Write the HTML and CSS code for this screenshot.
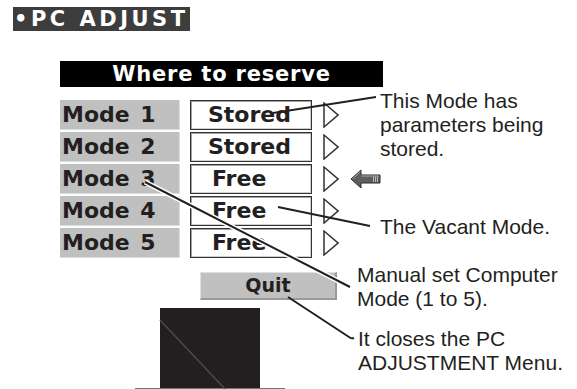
FILE: index.html
```html
<!DOCTYPE html>
<html lang="en">
<head>
  <meta charset="UTF-8">
  <meta name="viewport" content="width=device-width, initial-scale=1.0">
  <title>PC Adjust</title>
  <link rel="stylesheet" href="styles.css">
</head>
<body>
  <div class="page">
    <div class="title">&bull;PC ADJUST</div>

    <div class="menu">
      <div class="menu-head">Where to reserve</div>
      <div class="modes">
        <div class="mode">
          <div class="mode-name">Mode 1</div>
          <div class="mode-state">Stored</div>
          <svg class="pointer" viewBox="0 0 16 26"><polygon points="1,1 15,13 1,25" /></svg>
        </div>
        <div class="mode">
          <div class="mode-name">Mode 2</div>
          <div class="mode-state">Stored</div>
          <svg class="pointer" viewBox="0 0 16 26"><polygon points="1,1 15,13 1,25" /></svg>
        </div>
        <div class="mode">
          <div class="mode-name">Mode 3</div>
          <div class="mode-state free">Free</div>
          <svg class="pointer" viewBox="0 0 16 26"><polygon points="1,1 15,13 1,25" /></svg>
          <svg class="arrow" viewBox="0 0 31 20">
            <polygon points="1,10 11,1 11,6 30,6 30,14 11,14 11,19" fill="#5e5e5e" stroke="#2a2a2a" />
            <path d="M2.5,10 L10.5,2.5 M11.5,7 H29" stroke="#a8a8a8" fill="none" />
            <path d="M23.5,7.5 V13 M25.5,7.5 V13 M27.5,7.5 V13" stroke="#d0d0d0" stroke-width="0.8" />
          </svg>
        </div>
        <div class="mode">
          <div class="mode-name">Mode 4</div>
          <div class="mode-state free">Free</div>
          <svg class="pointer" viewBox="0 0 16 26"><polygon points="1,1 15,13 1,25" /></svg>
        </div>
        <div class="mode">
          <div class="mode-name">Mode 5</div>
          <div class="mode-state free">Free</div>
          <svg class="pointer" viewBox="0 0 16 26"><polygon points="1,1 15,13 1,25" /></svg>
        </div>
      </div>
      <div class="quit">Quit</div>
    </div>

    <div class="stand">
      <div class="block"></div>
    </div>

    <!-- callout texts -->
    <div class="note note-stored">This Mode has<br>parameters being<br>stored.</div>
    <div class="note note-vacant">The Vacant Mode.</div>
    <div class="note note-manual">Manual set Computer<br>Mode (1 to 5).</div>
    <div class="note note-quit">It closes the PC<br>ADJUSTMENT Menu.</div>

    <!-- leader lines -->
    <svg class="leaders" viewBox="0 0 577 389">
      <line x1="160" y1="320" x2="225" y2="389" stroke="#4a4a4a" stroke-width="1.5" />
      <line x1="273" y1="113" x2="376" y2="97" stroke="#231f20" stroke-width="2" />
      <line x1="278" y1="207" x2="370" y2="226" stroke="#231f20" stroke-width="2" />
      <line x1="145" y1="182" x2="350" y2="287" stroke="#fff" stroke-width="5" />
      <line x1="145" y1="182" x2="350" y2="287" stroke="#231f20" stroke-width="2" />
      <path d="M288,297 L349,337 Q352,339 354,338" stroke="#231f20" stroke-width="2" fill="none" />
    </svg>
  </div>
</body>
</html>
```

FILE: styles.css
```css
body {
  margin: 0;
  background: #fff;
  font-family: "Liberation Sans", Arial, sans-serif;
  color: #231f20;
}
.page {
  position: relative;
  width: 577px;
  height: 389px;
  overflow: hidden;
  padding-top: 7px;
  box-sizing: border-box;
}
.title {
  margin-left: 13px;
  width: 177px;
  height: 24px;
  background: #3d3d3d;
  color: #fff;
  font-family: "DejaVu Sans", sans-serif;
  font-weight: bold;
  font-size: 21px;
  line-height: 24px;
  letter-spacing: 3.5px;
  padding-left: 1px;
  box-sizing: border-box;
  white-space: nowrap;
  overflow: hidden;
}
.menu {
  margin: 30px 0 0 60px;
  width: 323px;
}
.menu-head {
  height: 26px;
  background: #000;
  color: #fff;
  font-family: "DejaVu Sans", sans-serif;
  font-weight: bold;
  font-size: 21px;
  line-height: 26px;
  letter-spacing: 0.8px;
  text-align: center;
}
.modes {
  margin-top: 13px;
  display: flex;
  flex-direction: column;
  gap: 2px;
}
.mode {
  display: flex;
  align-items: center;
  height: 30px;
}
.mode-name {
  width: 120px;
  height: 30px;
  box-sizing: border-box;
  background: #c0c0c0;
  border-right: 1px solid #dcdcdc;
  border-bottom: 1px solid #dcdcdc;
  padding-left: 2px;
  font-family: "DejaVu Sans", sans-serif;
  font-weight: bold;
  font-size: 22px;
  line-height: 30px;
  word-spacing: 3px;
}
.mode-state {
  margin-left: 10px;
  width: 122px;
  height: 30px;
  box-sizing: border-box;
  background: #fff;
  border: 1px solid #333;
  box-shadow: inset 1px 1px 0 #a0a0a0, inset -1px -1px 0 #d0d0d0;
  padding-left: 17px;
  font-family: "DejaVu Sans", sans-serif;
  font-weight: bold;
  font-size: 22px;
  line-height: 28px;
}
.mode-state.free {
  padding-left: 21px;
}
.pointer {
  margin-left: 11px;
  width: 16px;
  height: 26px;
}
.pointer polygon {
  fill: #fff;
  stroke: #333;
  stroke-width: 1.5;
}
.arrow {
  margin-left: 11px;
  width: 31px;
  height: 20px;
}
.quit {
  margin: 14px 0 0 140px;
  width: 137px;
  height: 28px;
  box-sizing: border-box;
  background: #c0c0c0;
  border-top: 1px solid #e0e0e0;
  border-left: 1px solid #e0e0e0;
  border-right: 2px solid #9a9a9a;
  border-bottom: 2px solid #9a9a9a;
  text-align: center;
  font-family: "DejaVu Sans", sans-serif;
  font-weight: bold;
  font-size: 19px;
  line-height: 25px;
}
.stand {
  margin: 8px 0 0 135px;
  width: 150px;
  border-bottom: 1px solid #777;
}
.block {
  margin-left: 25px;
  width: 100px;
  height: 80px;
  background: #231f20;
}
.note {
  position: absolute;
  font-size: 21px;
  line-height: 24px;
  white-space: nowrap;
}
.note-stored {
  left: 380px;
  top: 89px;
}
.note-vacant {
  left: 380px;
  top: 215px;
}
.note-manual {
  left: 357px;
  top: 263px;
}
.note-quit {
  left: 358px;
  top: 327px;
}
.leaders {
  position: absolute;
  left: 0;
  top: 0;
  width: 577px;
  height: 389px;
  pointer-events: none;
}
```
